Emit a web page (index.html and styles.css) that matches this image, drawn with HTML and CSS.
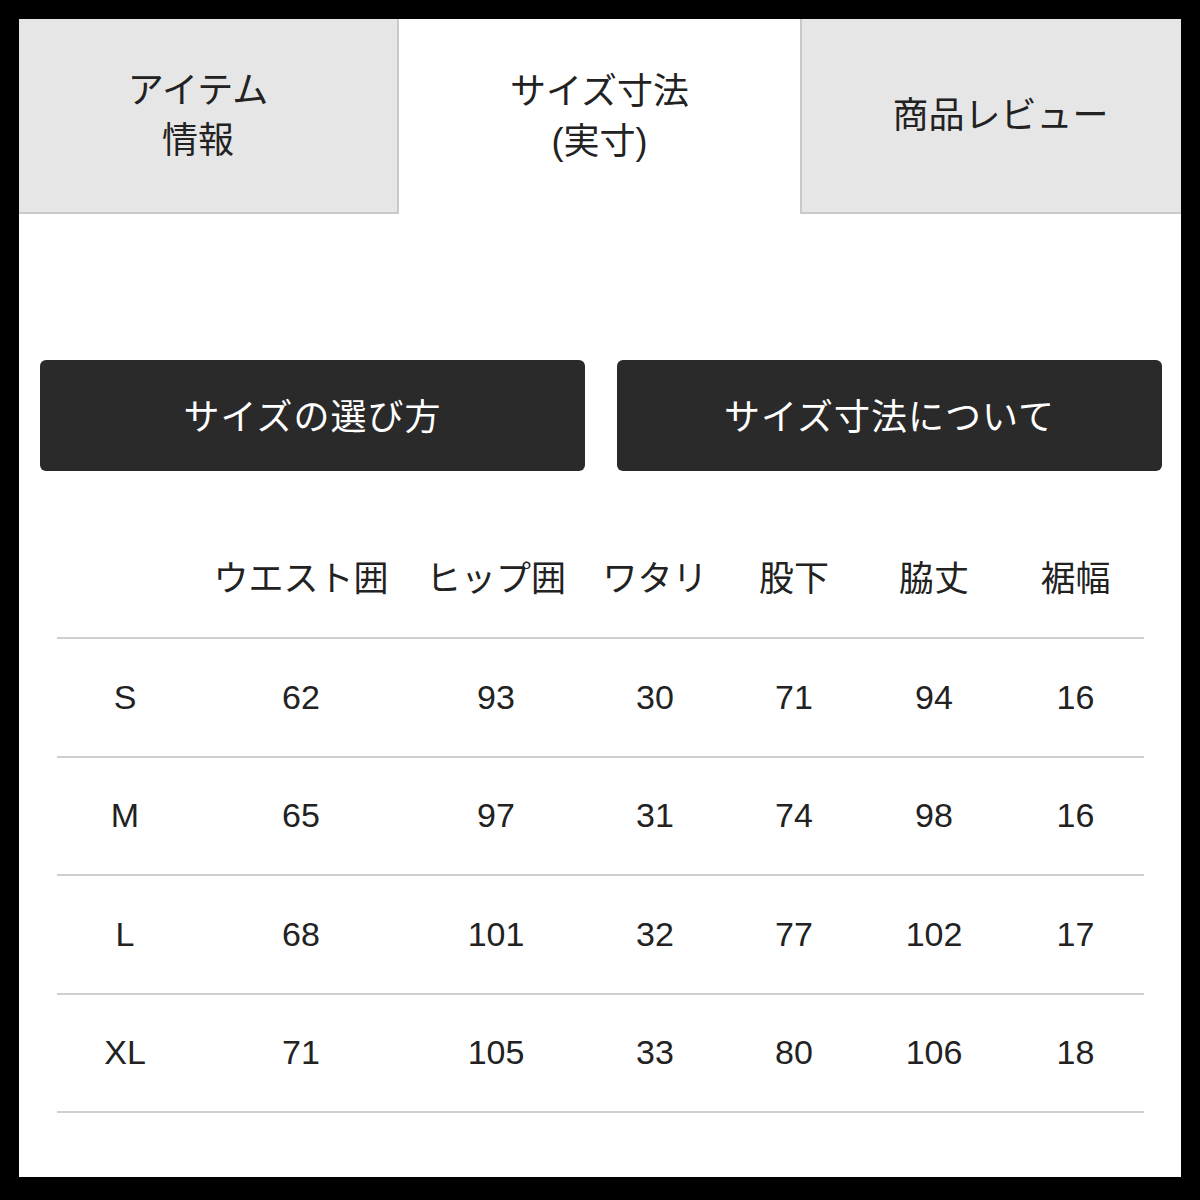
FILE: index.html
```html
<!DOCTYPE html>
<html lang="ja">
<head>
<meta charset="utf-8">
<title>サイズ寸法</title>
<link rel="stylesheet" href="styles.css">
</head>
<body>
<div class="frame">
  <div class="tabs">
    <div class="tab tab-left">アイテム<br>情報</div>
    <div class="tab tab-active">サイズ寸法<br>(実寸)</div>
    <div class="tab tab-right">商品レビュー</div>
  </div>
  <div class="buttons">
    <div class="btn">サイズの選び方</div>
    <div class="btn">サイズ寸法について</div>
  </div>
  <table class="size-table">
    <thead>
      <tr>
        <th class="c-size"></th>
        <th class="c-waist">ウエスト囲</th>
        <th class="c-hip">ヒップ囲</th>
        <th class="c-watari">ワタリ</th>
        <th class="c-mata">股下</th>
        <th class="c-waki">脇丈</th>
        <th class="c-suso">裾幅</th>
      </tr>
    </thead>
    <tbody>
      <tr><td>S</td><td>62</td><td>93</td><td>30</td><td>71</td><td>94</td><td>16</td></tr>
      <tr><td>M</td><td>65</td><td>97</td><td>31</td><td>74</td><td>98</td><td>16</td></tr>
      <tr><td>L</td><td>68</td><td>101</td><td>32</td><td>77</td><td>102</td><td>17</td></tr>
      <tr><td>XL</td><td>71</td><td>105</td><td>33</td><td>80</td><td>106</td><td>18</td></tr>
    </tbody>
  </table>
</div>
</body>
</html>
```

FILE: styles.css
```css
html, body {
  margin: 0;
  padding: 0;
  background: #000;
}
body {
  padding: 19px;
  font-family: "Liberation Sans", "Noto Sans CJK JP", sans-serif;
  color: #222;
}
.frame {
  width: 1162px;
  height: 1158px;
  background: #fff;
  box-sizing: border-box;
}
.tabs {
  display: grid;
  grid-template-columns: 380px 401px 381px;
  height: 195px;
}
.tab {
  display: flex;
  align-items: center;
  justify-content: center;
  text-align: center;
  font-size: 36px;
  line-height: 50px;
  box-sizing: border-box;
}
.tab-left {
  background: #e6e6e6;
  border-right: 2px solid #c9c9c9;
  border-bottom: 2px solid #c9c9c9;
  padding-right: 20px;
}
.tab-right {
  background: #e6e6e6;
  border-left: 2px solid #c9c9c9;
  border-bottom: 2px solid #c9c9c9;
  padding-left: 18px;
}
.tab-active {
  background: #fff;
}
.buttons {
  display: grid;
  grid-template-columns: 1fr 1fr;
  gap: 32px;
  padding: 146px 19px 0 21px;
}
.btn {
  height: 111px;
  background: #2a2a2a;
  border-radius: 6px;
  color: #fff;
  font-size: 36px;
  display: flex;
  align-items: center;
  justify-content: center;
  letter-spacing: 1px;
  padding-bottom: 4px;
  box-sizing: border-box;
}
.size-table {
  margin: 46px 0 0 38px;
  width: 1087px;
  border-collapse: collapse;
  table-layout: fixed;
}
.size-table th {
  height: 117px;
  font-size: 35px;
  font-weight: normal;
  text-align: center;
  padding: 0 0 3px;
  vertical-align: middle;
}
.size-table td {
  height: 116.5px;
  font-size: 34px;
  text-align: center;
  padding: 0;
  vertical-align: middle;
}
.size-table tbody tr {
  border-top: 2px solid #cfcfcf;
}
.size-table tbody tr:last-child {
  border-bottom: 2px solid #cfcfcf;
}
.c-size { width: 136px; }
.c-waist { width: 216px; }
.c-hip { width: 174px; }
.c-watari { width: 144px; }
.c-mata { width: 134px; }
.c-waki { width: 146px; }
.c-suso { width: 137px; }
```
